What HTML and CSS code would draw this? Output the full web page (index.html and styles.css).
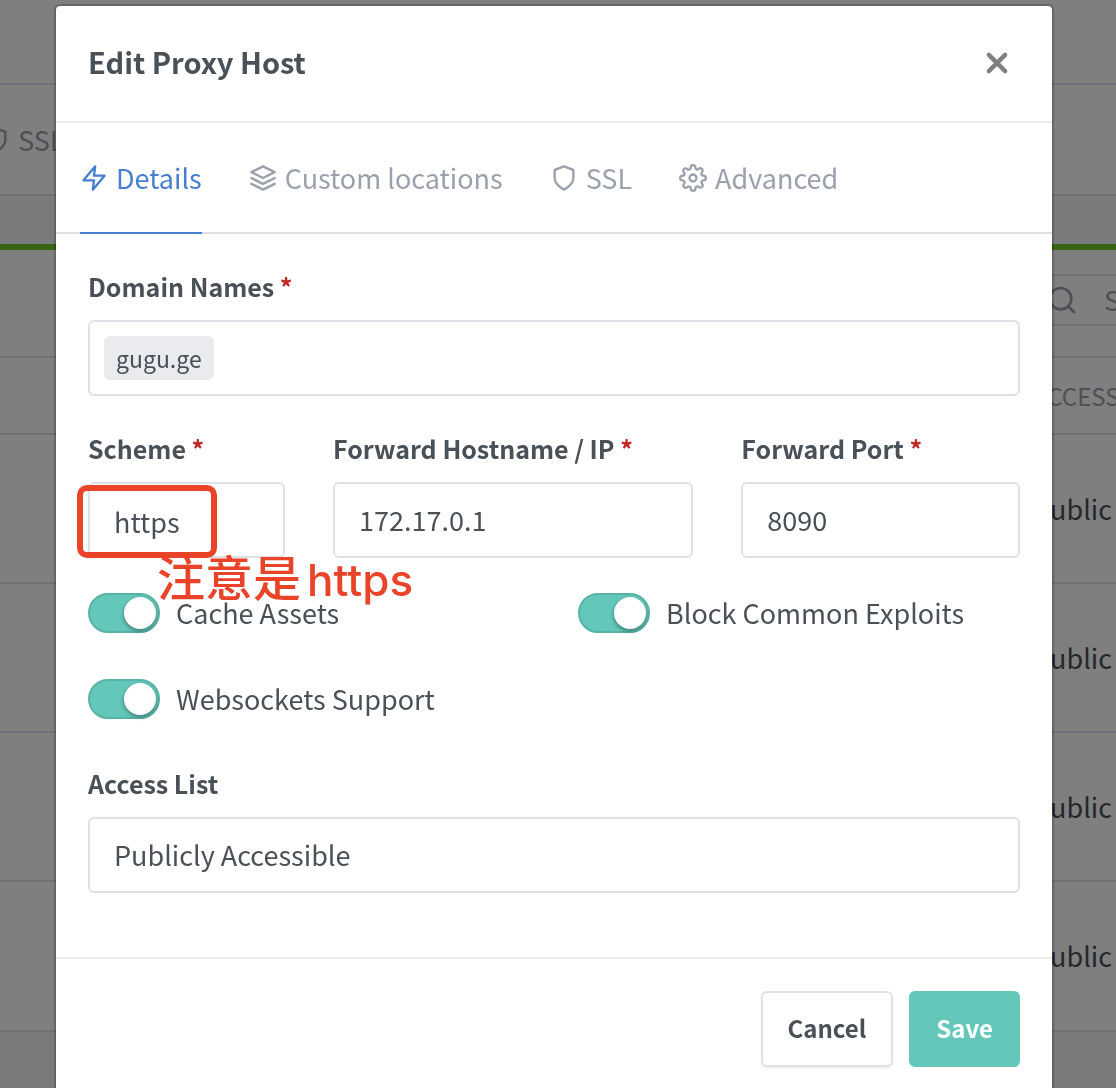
FILE: index.html
```html
<!DOCTYPE html>
<html lang="en">
<head>
<meta charset="utf-8">
<meta name="viewport" content="width=device-width, initial-scale=1">
<title>Edit Proxy Host</title>
<link rel="stylesheet" href="styles.css">
</head>
<body>
<svg class="sprite" aria-hidden="true">
  <symbol id="zap" viewBox="0 0 24 24"><polygon points="13 2 3 14 12 14 11 22 21 10 12 10 13 2"/></symbol>
  <symbol id="layers" viewBox="0 0 24 24"><polygon points="12 2 2 7 12 12 22 7 12 2"/><polyline points="2 17 12 22 22 17"/><polyline points="2 12 12 17 22 12"/></symbol>
  <symbol id="shield" viewBox="0 0 24 24"><path d="M12 22s8-4 8-10V5l-8-3-8 3v7c0 6 8 10 8 10z"/></symbol>
  <symbol id="settings" viewBox="0 0 24 24"><circle cx="12" cy="12" r="3"/><path d="M19.4 15a1.65 1.65 0 0 0 .33 1.82l.06.06a2 2 0 0 1 0 2.83 2 2 0 0 1-2.83 0l-.06-.06a1.65 1.65 0 0 0-1.82-.33 1.65 1.65 0 0 0-1 1.51V21a2 2 0 0 1-2 2 2 2 0 0 1-2-2v-.09A1.65 1.65 0 0 0 9 19.4a1.65 1.65 0 0 0-1.82.33l-.06.06a2 2 0 0 1-2.83 0 2 2 0 0 1 0-2.83l.06-.06a1.65 1.65 0 0 0 .33-1.82 1.65 1.65 0 0 0-1.51-1H3a2 2 0 0 1-2-2 2 2 0 0 1 2-2h.09A1.65 1.65 0 0 0 4.6 9a1.65 1.65 0 0 0-.33-1.82l-.06-.06a2 2 0 0 1 0-2.83 2 2 0 0 1 2.83 0l.06.06a1.65 1.65 0 0 0 1.82.33H9a1.65 1.65 0 0 0 1-1.51V3a2 2 0 0 1 2-2 2 2 0 0 1 2 2v.09a1.65 1.65 0 0 0 1 1.51 1.65 1.65 0 0 0 1.82-.33l.06-.06a2 2 0 0 1 2.83 0 2 2 0 0 1 0 2.83l-.06.06a1.65 1.65 0 0 0-.33 1.82V9a1.65 1.65 0 0 0 1.51 1H21a2 2 0 0 1 2 2 2 2 0 0 1-2 2h-.09a1.65 1.65 0 0 0-1.51 1z"/></symbol>
  <symbol id="search" viewBox="0 0 24 24"><circle cx="11" cy="11" r="8"/><line x1="21" y1="21" x2="16.65" y2="16.65"/></symbol>
  <symbol id="close" viewBox="0 0 24 24"><path d="M4.500 4.500l15 15M19.500 4.500l-15 15"/></symbol>
</svg>

<div class="page" inert>
  <header class="topbar"></header>
  <nav class="mainnav"><a href="#ssl"><svg class="icon"><use href="#shield"/></svg>SSL</a></nav>
  <main class="card">
    <div class="card-header">
      <label class="search"><svg class="icon"><use href="#search"/></svg><input type="text" placeholder="Search Host…" aria-label="Search"></label>
    </div>
    <table class="hosts">
      <thead><tr><th></th><th class="access">ACCESS</th></tr></thead>
      <tbody>
        <tr><td></td><td class="access">Public</td></tr>
        <tr><td></td><td class="access">Public</td></tr>
        <tr><td></td><td class="access">Public</td></tr>
        <tr><td></td><td class="access">Public</td></tr>
      </tbody>
    </table>
  </main>
</div>

<div class="backdrop">
  <form class="modal" role="dialog" aria-labelledby="title">
    <header class="modal-header">
      <h1 id="title">Edit Proxy Host</h1>
      <button type="button" class="close" aria-label="Close"><svg><use href="#close"/></svg></button>
    </header>
    <nav class="tabs">
      <a class="tab active" href="#details"><svg class="icon"><use href="#zap"/></svg>Details</a>
      <a class="tab" href="#locations"><svg class="icon"><use href="#layers"/></svg>Custom locations</a>
      <a class="tab" href="#ssl"><svg class="icon"><use href="#shield"/></svg>SSL</a>
      <a class="tab" href="#advanced"><svg class="icon"><use href="#settings"/></svg>Advanced</a>
    </nav>
    <div class="modal-body">
      <div class="field">
        <label for="domains">Domain Names <span class="required">*</span></label>
        <div class="control tags"><span class="tag">gugu.ge</span><input id="domains" type="text"></div>
      </div>
      <div class="row">
        <div class="field">
          <label for="scheme">Scheme <span class="required">*</span></label>
          <div class="marked">
            <select id="scheme" class="control"><option>https</option><option>http</option></select>
            <div class="mark"></div>
            <div class="note"><span>注意是</span><span>https</span></div>
          </div>
        </div>
        <div class="field">
          <label for="host">Forward Hostname / IP <span class="required">*</span></label>
          <input id="host" class="control" type="text" value="172.17.0.1">
        </div>
        <div class="field">
          <label for="port">Forward Port <span class="required">*</span></label>
          <input id="port" class="control" type="text" value="8090">
        </div>
      </div>
      <div class="toggles">
        <label class="toggle"><input type="checkbox" checked>Cache Assets</label>
        <label class="toggle"><input type="checkbox" checked>Block Common Exploits</label>
        <label class="toggle"><input type="checkbox" checked>Websockets Support</label>
      </div>
      <div class="field">
        <label for="access">Access List</label>
        <select id="access" class="control"><option>Publicly Accessible</option></select>
      </div>
    </div>
    <footer class="modal-footer">
      <button type="button" class="btn">Cancel</button>
      <button type="submit" class="btn primary">Save</button>
    </footer>
  </form>
</div>
</body>
</html>
```
FILE: styles.css
```css
*, *::before, *::after { box-sizing: border-box; }

body {
  margin: 0;
  height: 100vh;
  overflow: hidden;
  background: #f5f7fb;
  color: #495057;
  font-family: "Noto Sans CJK SC", "Noto Sans", sans-serif;
  font-size: 27px;
  line-height: 44px;
}

a { color: inherit; text-decoration: none; }
input, select, button { font: inherit; color: inherit; }

.sprite { position: absolute; width: 0; height: 0; }

.icon {
  flex: none;
  width: 28px;
  height: 28px;
  fill: none;
  stroke: currentColor;
  stroke-width: 2;
  stroke-linecap: round;
  stroke-linejoin: round;
}

/* Page behind the dialog */
.page { height: 100vh; overflow: hidden; }
.topbar { height: 85px; background: #fff; border-bottom: 2px solid #dfe1e6; }
.mainnav {
  height: 111px;
  display: flex;
  align-items: center;
  background: #fff;
  border-bottom: 2px solid #dfe1e6;
  color: #9aa0ac;
}
.mainnav a { display: flex; align-items: center; gap: 8px; margin-left: -18px; }
.card {
  margin-top: 48px;
  background: #fff;
  border-top: 6px solid #74c82a;
  border-bottom: 2px solid #dfe1e6;
}
.card-header {
  height: 108px;
  display: flex;
  align-items: flex-start;
  justify-content: flex-end;
  padding-top: 24px;
  border-bottom: 2px solid #dfe1e6;
}
.search {
  display: flex;
  align-items: center;
  gap: 26px;
  width: 90px;
  height: 52px;
  padding-left: 20px;
  border: solid #dfe1e6;
  border-width: 2px 0;
  color: #9aa0ac;
  overflow: hidden;
}
.search .icon { width: 32px; height: 32px; }
.search input { flex: none; width: 200px; padding: 0; border: 0; background: none; }
.search input::placeholder { color: #9aa0ac; }
.hosts { width: 100%; table-layout: fixed; border-collapse: collapse; }
.hosts th, .hosts td { height: 149px; padding: 0; text-align: left; border-bottom: 2px solid #dfe1e6; }
.hosts th { height: 76px; font-weight: 400; font-size: 24px; color: #9aa0ac; }
.hosts .access { width: 83px; white-space: nowrap; }
.hosts tbody tr:last-child td { border-bottom: 0; }

/* Dialog */
.backdrop {
  position: fixed;
  inset: 0;
  padding: 4px 62px 0 54px;
  background: rgba(0, 0, 0, .5);
  overflow: hidden;
}
.modal {
  background: #fff;
  background-clip: padding-box;
  border: 2px solid rgba(0, 0, 0, .2);
  border-radius: 6px;
}
.modal-header {
  display: flex;
  align-items: flex-start;
  justify-content: space-between;
  padding: 35px 32px 36px;
  border-bottom: 2px solid #ebecee;
}
.modal-header h1 { margin: 0; font-size: 29px; font-weight: 700; line-height: 40px; }
.close { display: flex; padding: 9px 10px; border: 0; background: none; color: #7f7f7f; }
.close svg { width: 26px; height: 26px; fill: none; stroke: currentColor; stroke-width: 4; stroke-linecap: round; }

.tabs {
  display: flex;
  gap: 47px;
  padding: 0 24px;
  border-bottom: 2px solid #dee0e3;
  color: #9aa0ac;
}
.tab {
  display: flex;
  align-items: center;
  gap: 8px;
  height: 111px;
  margin-bottom: -2px;
  border-bottom: 2px solid transparent;
  white-space: nowrap;
}
.tab.active { color: #467fcf; border-color: #467fcf; }

.modal-body { padding: 32px 32px 64px; }
.field > label { display: block; margin-bottom: 14px; font-size: 25px; font-weight: 700; line-height: 40px; white-space: nowrap; }
.required { color: #c02a28; }
.control {
  display: block;
  width: 100%;
  height: 76px;
  padding: 0 24px;
  background: #fff;
  border: 2px solid #dfe1e8;
  border-radius: 6px;
  appearance: none;
}
input.control { padding-bottom: 2px; }
.tags { display: flex; align-items: center; gap: 8px; padding: 0 14px; }
.tag { padding: 0 12px; background: #e9ebef; border-radius: 6px; font-size: 23px; }
.tags input { flex: 1; min-width: 0; padding: 0; border: 0; outline: 0; background: none; }

.row { display: grid; grid-template-columns: 3fr 5fr 4fr; margin: 32px -24px 0; }
.row .field { min-width: 0; padding: 0 24px; }

.toggles { display: grid; grid-template-columns: 1fr 1fr; gap: 42px 48px; margin: 33px 0 42px; }
.toggle { display: flex; align-items: center; gap: 16px; }
.toggle input {
  flex: none;
  width: 72px;
  height: 40px;
  margin: 0;
  padding: 4px;
  appearance: none;
  background: #63c8ba;
  border: 2px solid #58b3a6;
  border-radius: 20px;
}
.toggle input::before {
  content: "";
  display: block;
  width: 32px;
  height: 32px;
  margin: -2px 0 0 30px;
  background: #fff;
  border-radius: 50%;
  box-shadow: 0 2px 4px rgba(0, 0, 0, .4);
}

/* Red annotation drawn over the scheme field */
.marked { position: relative; }
.marked .control { padding-top: 4px; }
.mark {
  position: absolute;
  left: -11px;
  top: 3px;
  width: 140px;
  height: 73px;
  border: 6px solid #e9432a;
  border-radius: 10px;
}
.note {
  position: absolute;
  left: 69px;
  top: 67px;
  display: flex;
  align-items: baseline;
  gap: 6px;
  color: #e9432a;
  font-family: Inter, "Noto Sans CJK SC", sans-serif;
  font-size: 48px;
  font-weight: 500;
  line-height: 60px;
  white-space: nowrap;
}
.note span:last-child { font-size: 44px; }

.modal-footer {
  display: flex;
  justify-content: flex-end;
  gap: 16px;
  padding: 32px;
  border-top: 2px solid #ebecee;
}
.btn {
  height: 76px;
  padding: 0 25px 2px;
  background: #fff;
  border: 2px solid #dfe1e8;
  border-radius: 6px;
  box-shadow: 0 2px 2px rgba(0, 0, 0, .05);
  font-size: 24px;
  font-weight: 700;
}
.btn.primary { background: #63c8ba; border-color: #63c8ba; color: #fff; box-shadow: none; }
```
